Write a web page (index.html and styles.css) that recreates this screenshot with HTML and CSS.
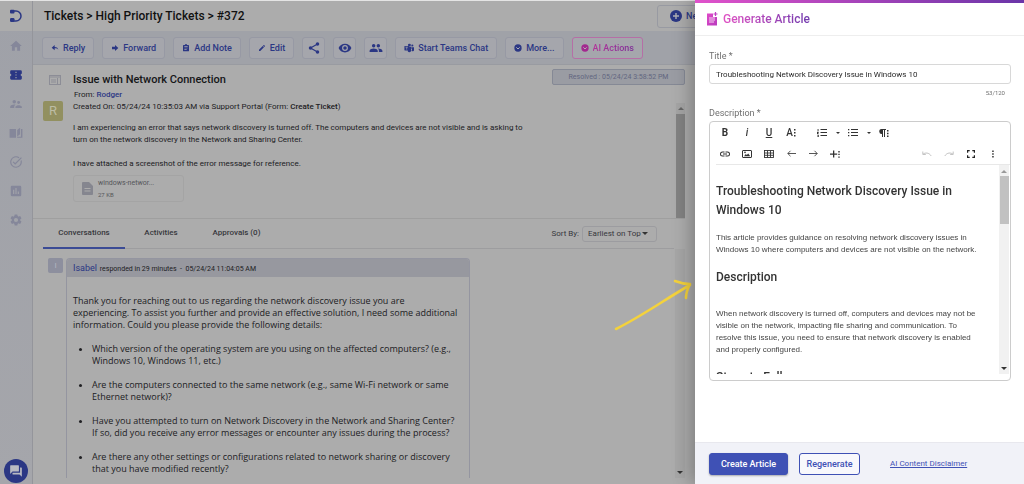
FILE: index.html
```html
<!DOCTYPE html>
<html lang="en">
<head>
<meta charset="utf-8">
<title>Ticket #372</title>
<link rel="stylesheet" href="styles.css">
</head>
<body>
<div class="app">
  <nav class="rail" aria-label="Main">
    <a class="logo" href="#" aria-label="Home page"><svg width="14" height="14" viewBox="0 0 14 14"><path d="M4.5 2H7a5 5 0 0 1 0 10H4.500" fill="none" stroke="#2b3784" stroke-width="1.500"/><rect x="1" y=".8" width="4.500" height="3.800" rx="1" fill="#2b3784"/><rect x="1" y="9" width="4.500" height="4" rx="1.200" fill="#2b3784"/></svg></a>
    <a href="#" aria-label="Dashboard"><svg viewBox="0 0 24 24"><path d="M10 20v-6h4v6h5v-8h3L12 3 2 12h3v8z"/></svg></a>
    <a class="on" href="#" aria-label="Tickets"><svg viewBox="0 0 24 24"><path d="M22 10V6a2 2 0 0 0-2-2H4a2 2 0 0 0-2 2v4a2 2 0 0 1 0 4v4a2 2 0 0 0 2 2h16a2 2 0 0 0 2-2v-4a2 2 0 0 1 0-4zm-9 7.500h-2v-2h2zm0-4.500h-2v-2h2zm0-4.500h-2v-2h2z"/></svg></a>
    <a href="#" aria-label="Users"><svg viewBox="0 0 24 24"><path d="M16.500 12a2.500 2.500 0 1 0 0-5 2.500 2.500 0 0 0 0 5zM9 11a3 3 0 1 0 0-6 3 3 0 0 0 0 6zm7.500 3c-1.830 0-5.500.92-5.500 2.750V19h11v-2.250c0-1.830-3.670-2.750-5.500-2.750zM9 13c-2.330 0-7 1.170-7 3.500V19h7v-2.250c0-.85.33-2.340 2.370-3.470C10.500 13.100 9.660 13 9 13z"/></svg></a>
    <a href="#" aria-label="Knowledge base"><svg viewBox="0 0 24 24"><path d="M1 5h11v15H1zM14 7l5-4v11l-5 4zM20.500 5H23v15h-9v-1.500h6.500z"/></svg></a>
    <a href="#" aria-label="Approvals"><svg viewBox="0 0 24 24"><path d="M22 5.180 10.590 16.600l-4.240-4.240 1.410-1.410 2.830 2.830 10-10zM19.790 10.220A8 8 0 1 1 16.500 5.410l1.430-1.430A10 10 0 1 0 21.400 8.600z"/></svg></a>
    <a href="#" aria-label="Reports"><svg viewBox="0 0 24 24"><path d="M19 3H5a2 2 0 0 0-2 2v14a2 2 0 0 0 2 2h14a2 2 0 0 0 2-2V5a2 2 0 0 0-2-2zM9 17H7v-7h2zm4 0h-2V7h2zm4 0h-2v-4h2z"/></svg></a>
    <a href="#" aria-label="Settings"><svg viewBox="0 0 24 24"><path d="M19.140 12.940a7 7 0 0 0 0-1.880l2.030-1.580a.5.5 0 0 0 .12-.61l-1.920-3.320a.5.5 0 0 0-.59-.22l-2.390.96a7 7 0 0 0-1.620-.94l-.36-2.540a.5.500 0 0 0-.48-.41h-3.840a.5.500 0 0 0-.47.41l-.36 2.540c-.59.240-1.130.57-1.620.94l-2.390-.96a.5.5 0 0 0-.59.22L2.740 8.870a.5.5 0 0 0 .12.610l2.030 1.580a7 7 0 0 0 0 1.880l-2.030 1.580a.5.5 0 0 0-.12.610l1.920 3.320c.12.220.37.290.59.220l2.390-.96c.5.380 1.030.700 1.620.940l.36 2.540c.05.240.240.410.48.410h3.840c.240 0 .440-.170.470-.410l.36-2.540a7 7 0 0 0 1.620-.940l2.390.96c.220.080.470 0 .590-.220l1.920-3.320a.5.5 0 0 0-.12-.610zM12 15.600a3.600 3.600 0 1 1 0-7.200 3.600 3.600 0 0 1 0 7.200z"/></svg></a>
    <button class="chat" aria-label="Open chat"><svg width="14" height="14" viewBox="0 0 24 24" fill="#b9bac2"><path d="M21 6h-2v9H6v2a1 1 0 0 0 1 1h11l4 4V7a1 1 0 0 0-1-1zm-4 6V3a1 1 0 0 0-1-1H3a1 1 0 0 0-1 1v14l4-4h10a1 1 0 0 0 1-1z"/></svg></button>
  </nav>
  <main class="page">
    <header class="head">
      <h1>Tickets &gt; High Priority Tickets &gt; #372</h1>
      <button class="new"><svg width="12" height="12" viewBox="0 0 12 12"><circle cx="6" cy="6" r="6" fill="#2b3784"/><path d="M6 3v6M3 6h6" stroke="#b0b0b5" stroke-width="1.400"/></svg>New</button>
    </header>
    <div class="tools">
      <button class="btn"><svg viewBox="0 0 24 24"><path d="M11 9V3L2 11l9 8v-6c5 0 9 1 11 5-1-5-4-9-11-9z"/></svg>Reply</button>
      <button class="btn"><svg viewBox="0 0 24 24"><path d="M12 3v5H3v8h9v5l10-9z"/></svg>Forward</button>
      <button class="btn"><svg viewBox="0 0 24 24"><path d="M19 3h-4a3 3 0 0 0-6 0H5a2 2 0 0 0-2 2v15a2 2 0 0 0 2 2h14a2 2 0 0 0 2-2V5a2 2 0 0 0-2-2zM7 7h10v2H7zm0 4h10v2H7zm7 6H7v-2h7z"/></svg>Add Note</button>
      <button class="btn"><svg viewBox="0 0 24 24"><path d="M3 17.250V21h3.750L17.810 9.940l-3.750-3.750zM20.710 7.040a1 1 0 0 0 0-1.410l-2.340-2.340a1 1 0 0 0-1.410 0l-1.830 1.830 3.750 3.750z"/></svg>Edit</button>
      <button class="btn sq" aria-label="Share"><svg viewBox="0 0 24 24"><path d="M18 5 6 12l12 7" fill="none" stroke="#2b3784" stroke-width="2"/><circle cx="18" cy="5" r="3"/><circle cx="6" cy="12" r="3"/><circle cx="18" cy="19" r="3"/></svg></button>
      <button class="btn sq" aria-label="Watch"><svg viewBox="0 0 24 24"><path d="M12 4.500C7 4.500 2.730 7.610 1 12c1.730 4.390 6 7.500 11 7.500s9.270-3.110 11-7.500c-1.730-4.390-6-7.500-11-7.500zM12 17a5 5 0 1 1 0-10 5 5 0 0 1 0 10zm0-8a3 3 0 1 0 0 6 3 3 0 0 0 0-6z"/></svg></button>
      <button class="btn sq" aria-label="Collaborators"><svg viewBox="0 0 24 24"><path d="M16 11a3 3 0 1 0 0-6 3 3 0 0 0 0 6zm-8 0a3 3 0 1 0 0-6 3 3 0 0 0 0 6zm0 2c-2.330 0-7 1.170-7 3.500V19h14v-2.500C15 14.170 10.330 13 8 13zm8 0-.97.050C16.190 13.890 17 15.020 17 16.500V19h6v-2.500c0-2.330-4.670-3.500-7-3.500z"/></svg></button>
      <button class="btn wide"><svg class="big" viewBox="0 0 24 24"><circle cx="13" cy="5" r="3.500"/><circle cx="20" cy="6" r="2.500"/><path d="M10 9h8v8a5 5 0 0 1-9 3zM19 10h5v6a3 3 0 0 1-5 3z"/><rect x="1" y="7" width="11" height="11" rx="1"/><path d="M3.500 10h6M6.500 10v6" stroke="#a5a6ae" stroke-width="1.600"/></svg>Start Teams Chat</button>
      <button class="btn"><svg viewBox="0 0 24 24"><circle cx="12" cy="12" r="11"/><path d="m7 10 5 5 5-5" fill="none" stroke="#b0b0b5" stroke-width="3"/></svg>More...</button>
      <button class="btn ai"><svg viewBox="0 0 24 24"><circle cx="12" cy="12" r="11"/><path d="m7 10 5 5 5-5" fill="none" stroke="#b0b0b5" stroke-width="3"/></svg><span>AI Actions</span></button>
    </div>
    <section class="ticket">
      <div class="side"><svg width="12" height="10" viewBox="0 0 12 10" fill="none" stroke="#8c8d96"><rect x=".5" y=".5" width="11" height="9"/><path d="M0 2h12M2 5h5M2 7h5M8.500 3v6"/></svg><span class="avatar">R</span></div>
      <div class="info">
        <div class="row"><h2>Issue with Network Connection</h2><span class="tag">Resolved : 05/24/24 3:58:52 PM</span></div>
        <p class="from">From: <a href="#">Rodger</a></p>
        <p>Created On: 05/24/24 10:35:03 AM via Support Portal (Form: <b>Create Ticket</b>)</p>
        <div class="msg">
          <p>I am experiencing an error that says network discovery is turned off. The computers and devices are not visible and is asking to<br>turn on the network discovery in the Network and Sharing Center.</p>
          <p>I have attached a screenshot of the error message for reference.</p>
        </div>
        <a class="file" href="#"><svg width="11" height="13" viewBox="0 0 11 13"><path d="M1 0h6l4 4v8a1 1 0 0 1-1 1H1a1 1 0 0 1-1-1V1a1 1 0 0 1 1-1z" fill="#85868f"/><path d="M2.500 6.500h6M2.500 9h6" stroke="#acacac"/></svg><span>windows-networ...<small>27 KB</small></span></a>
      </div>
      <div class="bar"><i class="up"></i><i class="thumb"></i></div>
    </section>
    <div class="tabs">
      <button class="tab sel">Conversations</button><button class="tab">Activities</button><button class="tab">Approvals (0)</button>
      <label class="sort" for="sort">Sort By:</label>
      <span class="pick"><select id="sort"><option>Earliest on Top</option></select><i class="down"></i></span>
    </div>
    <section class="thread">
      <span class="avatar small">I</span>
      <article class="card">
        <header><a href="#">Isabel</a> <span>responded in 29 minutes &nbsp;-&nbsp; 05/24/24 11:04:05 AM</span></header>
        <div class="reply">
          <p>Thank you for reaching out to us regarding the network discovery issue you are<br>experiencing. To assist you further and provide an effective solution, I need some additional<br>information. Could you please provide the following details:</p>
          <ul>
            <li>Which version of the operating system are you using on the affected computers? (e.g.,<br>Windows 10, Windows 11, etc.)</li>
            <li>Are the computers connected to the same network (e.g., same Wi-Fi network or same<br>Ethernet network)?</li>
            <li>Have you attempted to turn on Network Discovery in the Network and Sharing Center?<br>If so, did you receive any error messages or encounter any issues during the process?</li>
            <li>Are there any other settings or configurations related to network sharing or discovery<br>that you have modified recently?</li>
          </ul>
        </div>
      </article>
      <div class="bar lower"><i class="down"></i></div>
    </section>
  </main>
</div>
<svg class="arrow" width="78" height="54" viewBox="0 0 78 54" fill="none" stroke="#f4d23c" stroke-width="2.600" stroke-linecap="round" stroke-linejoin="round"><path d="M2 50C28 37 50 21 76 6M61 2c5 2 10 3 15 3-2 4-4 8-4 14"/></svg>
<aside class="drawer" aria-label="Generate Article">
  <header class="title"><svg width="11" height="14" viewBox="0 0 11 14"><defs><linearGradient id="g" x2="1" y2="1"><stop stop-color="#e049c8"/><stop offset="1" stop-color="#b83bbd"/></linearGradient></defs><path d="M0 1.500h6v3.500h4V13.500H0z" fill="url(#g)"/><path d="M8.500 0v4M6.500 2h4" stroke="#c13fc3" stroke-width="1.200"/><path d="M2 6h6M2 8h6M2 10h5" stroke="#fff" stroke-width=".8"/></svg><h2>Generate Article</h2></header>
  <form class="form">
    <label for="t">Title *</label>
    <input id="t" type="text" value="Troubleshooting Network Discovery Issue in Windows 10">
    <div class="count">53/120</div>
    <label id="d">Description *</label>
    <div class="editor">
      <div class="edbar">
        <button type="button"><b>B</b></button><button type="button" class="it">i</button><button type="button"><u>U</u></button><button type="button">A<svg width="2" height="8" viewBox="0 0 2 8"><path d="M0 0h1.500v1.500H0zM0 3h1.500v1.500H0zM0 6h1.500v1.500H0z"/></svg></button>
        <button type="button" class="list" aria-label="Ordered list"><svg width="10" height="8" viewBox="0 0 10 8"><path d="M3.500 0h6.500v1.100H3.500zM3.500 3h6.500v1.100H3.500zM3.500 6h6.500v1.100H3.500zM.6 0h.9v2H.6zM0 2.800h1.800v.7L.8 4.500h1V5H0zM0 5.800h1.800V8H0v-.6h1V7H.4v-.500H1z"/></svg></button><button type="button" class="drop" aria-label="Ordered list styles"><i class="down"></i></button>
        <button type="button" aria-label="Bullet list"><svg width="10" height="8" viewBox="0 0 10 8"><path d="M3 0h7v1.100H3zM3 3h7v1.100H3zM3 6h7v1.100H3zM0 0h1.300v1.300H0zM0 3h1.300v1.300H0zM0 6h1.300v1.300H0z"/></svg></button><button type="button" class="drop" aria-label="Bullet list styles"><i class="down"></i></button>
        <button type="button" aria-label="Paragraph"><svg width="10" height="8" viewBox="0 0 10 8"><path d="M2.500 0H7v1H6v7H5V1H4v7H3V5a2.500 2.500 0 0 1-.5-5zM8 1h1.500v1.500H8zM8 3.700h1.500v1.500H8zM8 6.400h1.500v1.500H8z"/></svg></button>
      </div>
      <div class="edbar">
        <button type="button" aria-label="Link"><svg width="12" height="12" viewBox="0 0 24 24"><path d="M3.900 12A3.100 3.100 0 0 1 7 8.900h4V7H7a5 5 0 0 0 0 10h4v-1.900H7A3.100 3.100 0 0 1 3.900 12zM8 13h8v-2H8zm9-6h-4v1.900h4a3.100 3.100 0 0 1 0 6.200h-4V17h4a5 5 0 0 0 0-10z"/></svg></button>
        <button type="button" aria-label="Image"><svg width="10" height="8" viewBox="0 0 10 8"><rect x=".5" y=".5" width="9" height="7" rx=".5" fill="none" stroke="#333"/><path d="m2 6.200 1.800-2.200 1 1.100L6.200 3.500 8.200 6.200z"/><circle cx="3" cy="2.400" r=".8"/></svg></button>
        <button type="button" aria-label="Table"><svg width="10" height="8" viewBox="0 0 10 8" fill="none" stroke="#333" stroke-width=".9"><rect x=".5" y=".5" width="9" height="7"/><path d="M.5 3h9M.5 5.300h9M3.500.5v7M6.500.5v7"/></svg></button>
        <button type="button" aria-label="Back"><svg width="9" height="7" viewBox="0 0 9 7" fill="none" stroke="#444" stroke-width=".9"><path d="M9 3.500H.8M3.500.8.8 3.500l2.700 2.700"/></svg></button>
        <button type="button" aria-label="Next"><svg width="9" height="7" viewBox="0 0 9 7" fill="none" stroke="#444" stroke-width=".9"><path d="M0 3.500h8.200M5.500.8l2.700 2.700-2.700 2.700"/></svg></button>
        <button type="button" aria-label="Insert"><svg width="10" height="8" viewBox="0 0 10 8"><path d="M3 .5h1.300v2.900h2.900v1.300H4.300v2.900H3V4.700H0V3.400h3zM8.300 1h1.400v1.400H8.300zM8.300 3.700h1.400v1.400H8.300zM8.300 6.400h1.400v1.400H8.300z"/></svg></button>
        <span class="gap"></span>
        <button type="button" aria-label="Undo"><svg width="10" height="6" viewBox="0 0 10 6" fill="none" stroke="#c4c4c4"><path d="M.8.500v3h3M1 3.200C3 1.500 7 1.300 9.200 5"/></svg></button>
        <button type="button" aria-label="Redo"><svg width="10" height="6" viewBox="0 0 10 6" fill="none" stroke="#c4c4c4"><path d="M9.200.5v3h-3M9 3.200C7 1.500 3 1.300.8 5"/></svg></button>
        <button type="button" aria-label="Full screen"><svg width="8" height="8" viewBox="0 0 8 8" fill="none" stroke="#222" stroke-width="1.200"><path d="M.6 2.700V.6h2.100M5.300.6h2.100v2.100M7.400 5.300v2.100H5.300M2.700 7.400H.6V5.300"/></svg></button>
        <button type="button" aria-label="More tools"><svg width="2" height="8" viewBox="0 0 2 8"><path d="M.2.500h1.500V2H.2zM.2 3.200h1.500v1.500H.2zM.2 6h1.500v1.500H.2z"/></svg></button>
      </div>
      <div class="body">
        <div class="doc" contenteditable="true" role="textbox" aria-labelledby="d" spellcheck="false">
          <h3>Troubleshooting Network Discovery Issue in Windows 10</h3>
          <p>This article provides guidance on resolving network discovery issues in<br>Windows 10 where computers and devices are not visible on the network.</p>
          <h3>Description</h3>
          <p class="lead">When network discovery is turned off, computers and devices may not be<br>visible on the network, impacting file sharing and communication. To<br>resolve this issue, you need to ensure that network discovery is enabled<br>and properly configured.</p>
          <h3>Steps to Follow</h3>
        </div>
        <div class="scroll"><i class="up"></i><i class="thumb"></i><i class="down"></i></div>
      </div>
    </div>
  </form>
  <footer class="foot"><button class="primary">Create Article</button><button class="second">Regenerate</button><a href="#">AI Content Disclaimer</a></footer>
</aside>
</body>
</html>
```
FILE: styles.css
```css
* { box-sizing: border-box; }
body { margin: 0; font: 9px/12px Roboto, "Liberation Sans", sans-serif; color: #202023; background: #acacac; overflow: hidden; }
h1, h2, h3, p, ul { margin: 0; font-weight: 500; }
p, ul { font-weight: 400; }
button, input, select { font: inherit; color: inherit; margin: 0; }
button { background: none; border: 0; padding: 0; display: flex; align-items: center; justify-content: center; }
a { color: #2b3784; text-decoration: none; }
svg { flex: none; display: block; }
.up, .down { display: block; width: 0; height: 0; border: 3px solid transparent; }
.up { border-top: 0; border-bottom-color: #666; }
.down { border-bottom: 0; border-top-color: #333; }

.app { display: grid; grid-template-columns: 33px 1fr; height: 100vh; border-top: 1px solid #e4e4e4; }
.rail { display: flex; flex-direction: column; align-items: center; background: linear-gradient(#9fa1a8, #a5a6ab); border-right: 1px solid #94959b; }
.rail > a { height: 29px; display: flex; align-items: center; }
.rail > a svg { width: 14px; height: 14px; fill: #85879a; }
.rail > .on svg { fill: #2b3784; }
.rail > .logo { height: 30px; width: 100%; justify-content: center; background: #acacac; }
.rail > .logo svg { fill: none; }
.chat { width: 24px; height: 24px; border-radius: 50%; background: #2b3784; margin: auto 0 1px; }

.page { min-width: 0; display: flex; flex-direction: column; }
.head { height: 30px; display: flex; align-items: center; justify-content: space-between; padding: 0 307px 0 11px; }
h1 { font-size: 12px; line-height: 16px; color: #111; }
.new { width: 60px; height: 23px; gap: 4px; border: 1px solid #989aa2; border-radius: 3px; color: #2b3784; font-size: 9px; font-weight: 500; }
.tools { display: flex; gap: 8px; height: 34px; padding: 6px 9px; background: #a0a2a8; border-bottom: 1px solid #999ba1; }
.btn { height: 22px; gap: 4px; padding: 0 8px; background: #a5a6ac; border: 1px solid #9799a4; border-radius: 3px; color: #2b3784; font-size: 9px; font-weight: 500; }
.btn svg { width: 8px; height: 8px; fill: #2b3784; }
.btn .big { width: 10px; height: 10px; }
.btn.sq { width: 23px; padding: 0; }
.btn.sq svg { width: 14px; height: 14px; }
.btn.ai { border-color: #b56fa6; }
.btn.ai svg { fill: #a3288f; }
.btn.ai span { background: linear-gradient(90deg, #b3339a, #7d2c97); background-clip: text; color: transparent; }

.ticket { display: flex; margin-right: 339px; height: 154px; border-bottom: 1px solid #9f9f9f; }
.side { width: 40px; padding: 10px 0 0 10px; display: flex; flex-direction: column; gap: 16px; }
.side svg { margin-left: 6px; }
.avatar { width: 20px; height: 20px; border-radius: 2px; background: #929060; color: #bdbda4; font-size: 13px; line-height: 20px; text-align: center; }
.info { flex: 1; min-width: 0; padding-top: 4px; white-space: nowrap; font-size: 8px; }
.row { display: flex; justify-content: space-between; }
.row h2 { font-size: 11px; line-height: 14px; padding-top: 4px; color: #161618; }
.tag { width: 133px; height: 16px; border: 1px solid #858995; border-radius: 2px; background: #9a9ca3; color: #626680; text-align: center; line-height: 14px; font-size: 7px; }
.from { padding-left: 1px; margin-top: 2px; }
.from a, b { font-weight: 500; }
.msg { margin-top: 9px; display: flex; flex-direction: column; gap: 12px; }
.file { display: flex; align-items: center; gap: 5px; width: 111px; height: 27px; margin-top: 5px; padding-left: 8px; border: 1px solid #a4a4a4; border-radius: 3px; color: #55565a; font-size: 7px; }
.file span { line-height: 11px; }
.file small { display: block; font-size: 6px; }
.bar { width: 9px; margin-left: -9px; margin-top: 38px; display: flex; flex-direction: column; align-items: center; gap: 4px; background: #a4a4a4; padding-top: 4px; }
.bar .thumb { width: 9px; flex: 1; background: #828282; }

.tabs { display: flex; align-items: center; height: 30px; margin: 0 350px 0 10px; border-bottom: 1px solid #9d9d9f; color: #37383c; font-size: 8px; }
.tab { height: 30px; width: 82px; font-weight: 500; border-bottom: 2px solid transparent; }
.tab + .tab { width: 72px; }
.tab + .tab + .tab { width: 79px; }
.tab.sel { border-color: #3b4b95; }
.sort { margin-left: auto; }
.pick { display: flex; align-items: center; width: 75px; height: 16px; margin: 0 17px 0 3px; padding: 0 8px 0 5px; border: 1px solid #9c9ca0; border-radius: 3px; }
.pick select { appearance: none; background: none; border: 0; padding: 0; flex: 1; min-width: 0; }

.thread { flex: 1; min-height: 0; display: flex; padding: 9px 339px 6px 15px; }
.small { width: 15px; height: 15px; line-height: 15px; font-size: 8px; background: #8d8f9e; color: #b4b5c0; }
.card { width: 404px; margin-left: 3px; overflow: hidden; border: 1px solid #9495a0; border-bottom: 0; border-radius: 4px 4px 0 0; white-space: nowrap; }
.card header { height: 18px; line-height: 18px; padding-left: 6px; background: #97989f; font-size: 7px; }
.card header a { font-size: 9px; margin-right: 1px; }
.reply { padding: 18px 6px 0; font: 9px/12px "Open Sans", "Noto Sans", sans-serif; color: #202023; }
.reply ul { padding-left: 19px; }
.reply li { margin-top: 12px; }
.bar.lower { width: 10px; margin: -9px 0 0 auto; justify-content: flex-end; padding-bottom: 4px; background: #a6a6a6; }

.arrow { position: absolute; left: 614px; top: 279px; }

.drawer { position: fixed; top: 0; right: 0; bottom: 0; width: 329px; display: flex; flex-direction: column; background: #fff; border-top: 3px solid; border-image: linear-gradient(90deg, #e152cb, #6a35a8) 1; box-shadow: -3px 0 18px rgba(0, 0, 0, .3); }
.title { height: 33px; padding-left: 12px; display: flex; align-items: center; gap: 5px; border-bottom: 1px solid #eee; }
.title h2 { font-size: 12px; line-height: 16px; background: linear-gradient(90deg, #e052c4, #7139ad); background-clip: text; color: transparent; }
.form { flex: 1; min-height: 0; display: flex; flex-direction: column; padding: 14px 13px 0 14px; color: #707070; }
.form input { height: 20px; margin-top: 2px; padding: 0 6px; border: 1px solid #d8d8d8; border-radius: 3px; color: #2a2a2a; font-size: 8px; }
.count { text-align: right; margin: 3px 6px 8px; font-size: 6px; }
.editor { height: 260px; margin-top: 2px; padding-bottom: 6px; border: 1px solid #ccc; border-radius: 4px; display: flex; flex-direction: column; color: #333; }
.edbar { display: flex; height: 21px; padding: 0 6px 0 4px; }
.edbar button { width: 22px; font-size: 10px; gap: 1px; font-weight: 500; fill: #333; }
.edbar b { font-weight: 700; }
.edbar .it { font-style: italic; }
.edbar .list { margin-left: 9px; }
.edbar .drop { width: 9px; }
.drop i { border-width: 2px; border-bottom-width: 0; }
.gap { flex: 1; }
.body { flex: 1; min-height: 0; display: flex; margin-left: 6px; border-top: 1px solid #e8e8e8; }
.doc { flex: 1; overflow: hidden; padding-top: 17px; font-family: "Liberation Sans", sans-serif; font-size: 8px; color: #444; outline: 0; white-space: nowrap; }
.doc h3 { font: 500 12px/19px Roboto, sans-serif; color: #333; white-space: normal; }
.doc p { margin: 12px 0; }
.doc .lead { margin-top: 21px; }
.scroll { width: 10px; margin-right: 1px; display: flex; flex-direction: column; align-items: center; background: #f1f1f1; padding: 5px 0 4px; }
.scroll .up { border-bottom-color: #999; }
.scroll .thumb { width: 9px; height: 48px; margin: 3px 0 auto; background: #c1c1c1; }
.foot { height: 42px; padding: 0 14px; display: flex; align-items: center; background: #f1f2f8; border-top: 1px solid #e8e8ee; font-weight: 500; }
.foot button { height: 22px; border: 1px solid #3f51b5; border-radius: 3px; }
.primary { width: 79px; background: #3f51b5; color: #fff; box-shadow: 0 1px 2px rgba(0, 0, 0, .3); }
.second { width: 61px; margin: 0 30px 0 11px; color: #3f51b5; background: #f8f8fc; }
.foot a { color: #3f51b5; text-decoration: underline; font-weight: 400; font-size: 8px; }
```
